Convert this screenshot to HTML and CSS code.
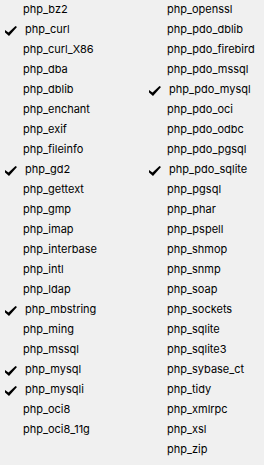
FILE: index.html
```html
<!DOCTYPE html>
<html>
<head>
<meta charset="utf-8">
<link rel="stylesheet" href="styles.css">
</head>
<body>
<div class="menu">
  <ul class="col">
    <li class="item">php_bz2</li>
    <li class="item checked"><svg class="check" viewBox="0 0 12 10" width="12" height="10"><path d="M0 4 L3.5 6.5 L10.5 0 L12 1 L4 10 L0 6.5 Z"/></svg>php_curl</li>
    <li class="item">php_curl_X86</li>
    <li class="item">php_dba</li>
    <li class="item">php_dblib</li>
    <li class="item">php_enchant</li>
    <li class="item">php_exif</li>
    <li class="item">php_fileinfo</li>
    <li class="item checked"><svg class="check" viewBox="0 0 12 10" width="12" height="10"><path d="M0 4 L3.5 6.5 L10.5 0 L12 1 L4 10 L0 6.5 Z"/></svg>php_gd2</li>
    <li class="item">php_gettext</li>
    <li class="item">php_gmp</li>
    <li class="item">php_imap</li>
    <li class="item">php_interbase</li>
    <li class="item">php_intl</li>
    <li class="item">php_ldap</li>
    <li class="item checked"><svg class="check" viewBox="0 0 12 10" width="12" height="10"><path d="M0 4 L3.5 6.5 L10.5 0 L12 1 L4 10 L0 6.5 Z"/></svg>php_mbstring</li>
    <li class="item">php_ming</li>
    <li class="item">php_mssql</li>
    <li class="item checked"><svg class="check" viewBox="0 0 12 10" width="12" height="10"><path d="M0 4 L3.5 6.5 L10.5 0 L12 1 L4 10 L0 6.5 Z"/></svg>php_mysql</li>
    <li class="item checked"><svg class="check" viewBox="0 0 12 10" width="12" height="10"><path d="M0 4 L3.5 6.5 L10.5 0 L12 1 L4 10 L0 6.5 Z"/></svg>php_mysqli</li>
    <li class="item">php_oci8</li>
    <li class="item">php_oci8_11g</li>
  </ul>
  <ul class="col">
    <li class="item">php_openssl</li>
    <li class="item">php_pdo_dblib</li>
    <li class="item">php_pdo_firebird</li>
    <li class="item">php_pdo_mssql</li>
    <li class="item checked"><svg class="check" viewBox="0 0 12 10" width="12" height="10"><path d="M0 4 L3.5 6.5 L10.5 0 L12 1 L4 10 L0 6.5 Z"/></svg>php_pdo_mysql</li>
    <li class="item">php_pdo_oci</li>
    <li class="item">php_pdo_odbc</li>
    <li class="item">php_pdo_pgsql</li>
    <li class="item checked"><svg class="check" viewBox="0 0 12 10" width="12" height="10"><path d="M0 4 L3.5 6.5 L10.5 0 L12 1 L4 10 L0 6.5 Z"/></svg>php_pdo_sqlite</li>
    <li class="item">php_pgsql</li>
    <li class="item">php_phar</li>
    <li class="item">php_pspell</li>
    <li class="item">php_shmop</li>
    <li class="item">php_snmp</li>
    <li class="item">php_soap</li>
    <li class="item">php_sockets</li>
    <li class="item">php_sqlite</li>
    <li class="item">php_sqlite3</li>
    <li class="item">php_sybase_ct</li>
    <li class="item">php_tidy</li>
    <li class="item">php_xmlrpc</li>
    <li class="item">php_xsl</li>
    <li class="item">php_zip</li>
  </ul>
</div>
</body>
</html>
```
FILE: styles.css
```css
html, body {
  margin: 0;
  padding: 0;
  background: #f0f0f0;
}
.menu {
  display: flex;
  width: 264px;
  height: 465px;
  overflow: hidden;
  font-family: Inter, "Liberation Sans", Arial, sans-serif;
  font-size: 11px;
  color: #000;
}
.col {
  list-style: none;
  margin: 0;
  padding: 0;
  width: 144px;
  flex: none;
}
.col + .col {
  width: 120px;
}
.item {
  position: relative;
  height: 20px;
  line-height: 18px;
  padding-left: 23px;
  white-space: nowrap;
}
.item.checked {
  padding-left: 25px;
}
.check {
  position: absolute;
  left: 5px;
  top: 6px;
  fill: #000;
}
```
